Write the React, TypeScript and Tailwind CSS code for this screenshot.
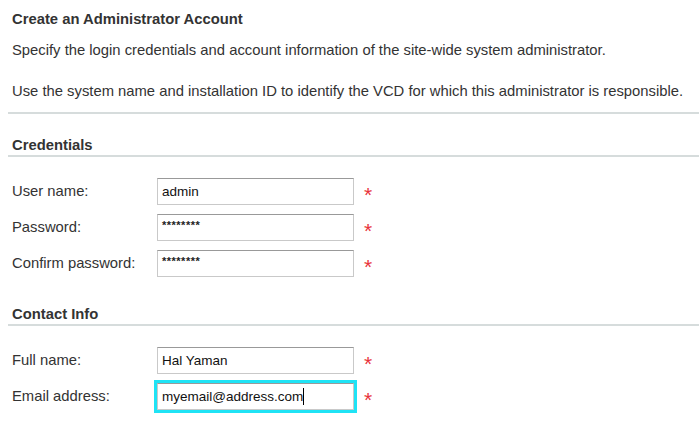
import React from 'react';

interface Field {
  label: string;
  value: string;
  secret?: boolean;
  focused?: boolean;
}

const credentials: Field[] = [
  { label: 'User name:', value: 'admin' },
  { label: 'Password:', value: '********', secret: true },
  { label: 'Confirm password:', value: '********', secret: true },
];

const contact: Field[] = [
  { label: 'Full name:', value: 'Hal Yaman' },
  { label: 'Email address:', value: 'myemail@address.com', focused: true },
];

const FieldRow: React.FC<{ field: Field }> = ({ field }) => (
  <div className="flex items-center h-[27px]">
    <div className="w-[149px] pl-[4px] text-[14.8px] text-[#333]">{field.label}</div>
    <div
      className={
        'w-[197px] h-[27px] bg-white border border-[#c9c9c9] border-t-[#999] flex pl-[4px] ' +
        (field.focused ? 'outline-[3px] outline-solid outline-[#1fe3f5]' : '')
      }
    >
      {field.secret ? (
        <span className="text-[11px] font-bold leading-none pt-[5px] tracking-[0.5px] text-[#222]">
          {field.value}
        </span>
      ) : (
        <span className="text-[13.5px] leading-[25px] text-[#111]">
          {field.value}
          {field.focused && <span className="inline-block w-px h-[17px] bg-black align-[-4px]" />}
        </span>
      )}
    </div>
    <span className="ml-[10px] text-[21px] leading-none text-[#e8333b] pt-[5px]">*</span>
  </div>
);

const Section: React.FC<{ title: string }> = ({ title }) => (
  <div className="border-b-2 border-[#d6dcdc] pb-[1px] pl-[4px] text-[14.8px] font-bold text-[#333] leading-[18px]">
    {title}
  </div>
);

const App: React.FC = () => {
  return (
    <div className="w-[699px] h-[447px] bg-white font-['Liberation_Sans',Arial,sans-serif] pl-[8px] overflow-hidden">
      <div className="pl-[4px] pt-[10px] text-[#333]">
        <h1 className="text-[14.8px] font-bold leading-[18px]">Create an Administrator Account</h1>
        <p className="mt-[13px] text-[14.8px] leading-[18px]">
          Specify the login credentials and account information of the site-wide system administrator.
        </p>
        <p className="mt-[23px] text-[14.8px] leading-[18px]">
          Use the system name and installation ID to identify the VCD for which this administrator is responsible.
        </p>
      </div>
      <div className="mt-[12px] border-b-2 border-[#d6dcdc]" />

      <div className="mt-[22px]">
        <Section title="Credentials" />
      </div>
      <div className="mt-[21px] flex flex-col gap-[9px]">
        {credentials.map((f) => (
          <FieldRow key={f.label} field={f} />
        ))}
      </div>

      <div className="mt-[28px]">
        <Section title="Contact Info" />
      </div>
      <div className="mt-[21px] flex flex-col gap-[9px]">
        {contact.map((f) => (
          <FieldRow key={f.label} field={f} />
        ))}
      </div>
    </div>
  );
};

export default App;
